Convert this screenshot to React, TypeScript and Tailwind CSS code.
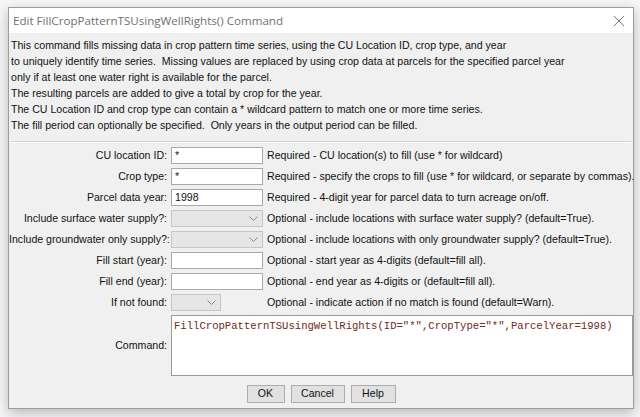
import React from 'react';

const lines = [
  'This command fills missing data in crop pattern time series, using the CU Location ID, crop type, and year',
  'to uniquely identify time series.  Missing values are replaced by using crop data at parcels for the specified parcel year',
  'only if at least one water right is available for the parcel.',
  'The resulting parcels are added to give a total by crop for the year.',
  'The CU Location ID and crop type can contain a * wildcard pattern to match one or more time series.',
  'The fill period can optionally be specified.  Only years in the output period can be filled.',
];

type Row = { label: string; kind: 'text' | 'combo' | 'smallcombo'; value?: string; note: string };

const rows: Row[] = [
  { label: 'CU location ID:', kind: 'text', value: '*', note: 'Required - CU location(s) to fill (use * for wildcard)' },
  { label: 'Crop type:', kind: 'text', value: '*', note: 'Required - specify the crops to fill (use * for wildcard, or separate by commas).' },
  { label: 'Parcel data year:', kind: 'text', value: '1998', note: 'Required - 4-digit year for parcel data to turn acreage on/off.' },
  { label: 'Include surface water supply?:', kind: 'combo', note: 'Optional - include locations with surface water supply? (default=True).' },
  { label: 'Include groundwater only supply?:', kind: 'combo', note: 'Optional - include locations with only groundwater supply? (default=True).' },
  { label: 'Fill start (year):', kind: 'text', value: '', note: 'Optional - start year as 4-digits (default=fill all).' },
  { label: 'Fill end (year):', kind: 'text', value: '', note: 'Optional - end year as 4-digits or (default=fill all).' },
  { label: 'If not found:', kind: 'smallcombo', note: 'Optional - indicate action if no match is found (default=Warn).' },
];

const Chevron = () => (
  <svg width="9" height="5" viewBox="0 0 9 5" fill="none" stroke="#8a8a8a" strokeWidth="1">
    <path d="M0.5 0.5L4.5 4.5L8.5 0.5" />
  </svg>
);

const Field: React.FC<{ row: Row }> = ({ row }) => {
  if (row.kind === 'text') {
    return (
      <div className="h-[17px] w-[92px] bg-white border border-[#a9a9a9] px-[3px] flex items-center leading-none">
        {row.value}
      </div>
    );
  }
  return (
    <div
      className={`h-[17px] ${row.kind === 'combo' ? 'w-[92px]' : 'w-[50px]'} bg-[#e6e6e6] border border-[#c6c6c6] flex items-center justify-end pr-[4px]`}
    >
      <Chevron />
    </div>
  );
};

export default function App() {
  return (
    <div className="w-[640px] h-[417px] bg-[#f6f6f8] overflow-hidden pt-[7px] pl-[8px]" style={{ fontFamily: '"Liberation Sans", Arial, sans-serif' }}>
      <div className="w-[626px] h-[402px] border border-[#9c9c9c] flex flex-col shadow-[0_4px_12px_rgba(0,0,0,0.25)]">
        {/* Title bar */}
        <div className="h-[25px] bg-white flex items-center justify-between pl-[4px] pr-[8px]">
          <span className="text-[11.6px] text-[#6f6f6f]" style={{ fontFamily: '"Open Sans", sans-serif' }}>
            Edit FillCropPatternTSUsingWellRights() Command
          </span>
          <svg width="12" height="12" viewBox="0 0 12 12" stroke="#7a7a7a" strokeWidth="1">
            <path d="M1 1L11 11M11 1L1 11" />
          </svg>
        </div>

        {/* Body */}
        <div className="flex-1 bg-[#f0f0f0] pt-[4px] flex flex-col text-[10.6px] text-[#111]">
          <div className="pl-[2px]">
            {lines.map((l, i) => (
              <div key={i} className="h-[16px] leading-[16px] whitespace-pre">{l}</div>
            ))}
          </div>

          <div className="mt-[8px] mx-[2px] border-t border-[#d3d3d3] border-b border-b-white" />

          <div className="mt-[4px] grid grid-cols-[158px_92px_1fr] gap-x-[4px] gap-y-[4px] items-center">
            {rows.map((r) => (
              <React.Fragment key={r.label}>
                <div className="text-right whitespace-nowrap leading-[17px]">{r.label}</div>
                <Field row={r} />
                <div className="whitespace-nowrap leading-[17px]">{r.note}</div>
              </React.Fragment>
            ))}
            <div className="text-right leading-[17px]">Command:</div>
            <div className="col-span-2 mr-[1px] h-[61px] bg-white border border-[#9a9a9a] px-[2px] pt-[2px]">
              <span className="text-[10.6px] text-[#6e2a22]" style={{ fontFamily: '"Liberation Mono", "Courier New", monospace' }}>
                FillCropPatternTSUsingWellRights(ID="*",CropType="*",ParcelYear=1998)
              </span>
            </div>
          </div>

          <div className="mt-[9px] flex justify-center gap-[6px]">
            <button className="h-[18px] w-[38px] bg-[#e1e1e1] border border-[#adadad] text-[10.6px]">OK</button>
            <button className="h-[18px] w-[54px] bg-[#e1e1e1] border border-[#adadad] text-[10.6px]">Cancel</button>
            <button className="h-[18px] w-[45px] bg-[#e1e1e1] border border-[#adadad] text-[10.6px]">Help</button>
          </div>
        </div>
      </div>
    </div>
  );
}
